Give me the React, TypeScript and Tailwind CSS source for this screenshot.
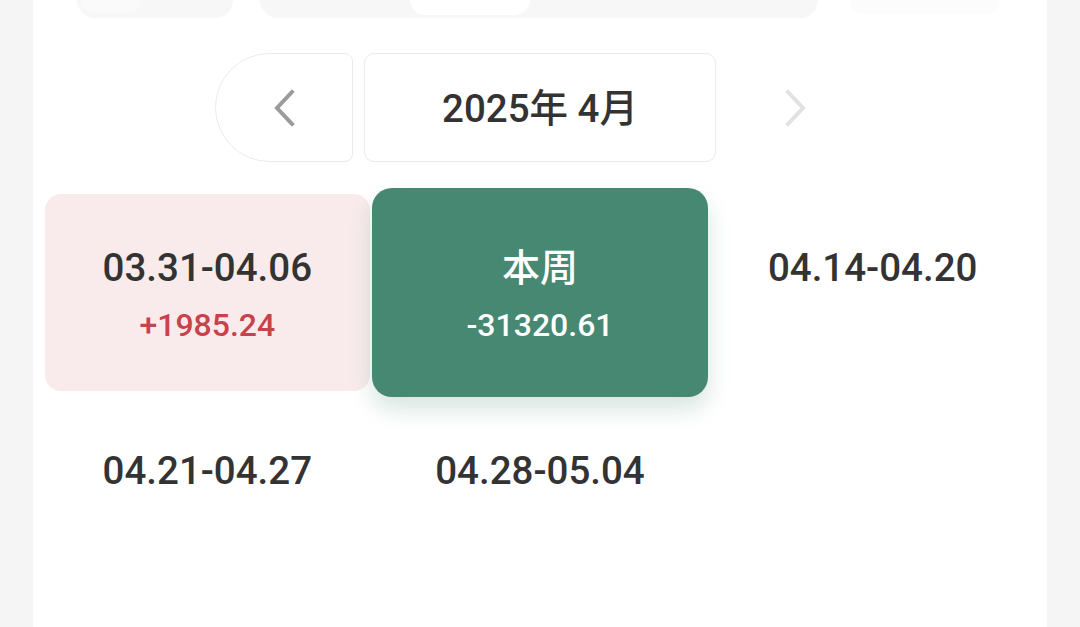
import React from "react";

type Week = { range: string; label?: string; amount?: string; kind?: "gain" | "current" };

const weeks: Week[] = [
  { range: "03.31-04.06", amount: "+1985.24", kind: "gain" },
  { range: "", label: "本周", amount: "-31320.61", kind: "current" },
  { range: "04.14-04.20" },
  { range: "04.21-04.27" },
  { range: "04.28-05.04" },
];

const font = { fontFamily: "Roboto, 'Noto Sans CJK SC', sans-serif" };

export default function App() {
  return (
    <div className="w-[1080px] h-[627px] bg-[#f5f5f5] overflow-hidden" style={font}>
      <div className="mx-[33px] h-full bg-white flex flex-col">
        {/* toolbar above, scrolled off */}
        <div className="flex items-start h-[18px] pl-[44px]">
          <div className="w-[156px] h-[18px] bg-[#f7f7f7] rounded-b-[40px] flex justify-start pl-[4px]">
            <div className="w-[60px] h-[13px] bg-[#fafafa] rounded-b-[30px]" />
          </div>
          <div className="ml-[27px] w-[558px] h-[18px] bg-[#f7f7f7] rounded-b-[40px] pl-[150px]">
            <div className="w-[120px] h-[15px] bg-white rounded-b-[30px]" />
          </div>
          <div className="ml-[32px] w-[150px] h-[14px] bg-[#fcfcfc] rounded-b-[20px]" />
        </div>

        {/* month switcher */}
        <div className="mt-[35px] flex justify-center gap-[11px]">
          <button className="w-[138px] h-[109px] border border-[#ebebeb] rounded-l-[55px] rounded-r-[8px] flex items-center justify-center">
            <Chevron dir="left" color="#9b9b9b" />
          </button>
          <div className="w-[352px] h-[109px] border border-[#ebebeb] rounded-[10px] flex items-center justify-center pt-[4px]">
            <span className="text-[38.5px] font-medium text-[#333] leading-none">2025年 4月</span>
          </div>
          <button className="w-[138px] h-[109px] flex items-center justify-center">
            <Chevron dir="right" color="#e2e2e2" />
          </button>
        </div>

        {/* weeks */}
        <div className="mt-[32px] px-[12px] grid grid-cols-3 gap-x-[8px] gap-y-[6px]">
          {weeks.map((w, i) => (
            <WeekCell key={i} week={w} />
          ))}
        </div>
      </div>
    </div>
  );
}

function WeekCell({ week }: { week: Week }) {
  if (week.kind === "current") {
    return (
      <div className="relative z-10 -mx-[6px] -my-[6px] h-[209px] rounded-[20px] bg-[#478872] shadow-[0_12px_22px_rgba(71,136,114,0.22)] flex flex-col items-center pt-[58px] text-white">
        <div className="text-[38px] font-medium leading-[44px]">{week.label}</div>
        <div className="mt-[16px] text-[32px] font-medium leading-[38px]">{week.amount}</div>
      </div>
    );
  }
  const bg = week.kind === "gain" ? "bg-[#f9ebeb]" : "bg-transparent";
  return (
    <div className={`h-[197px] rounded-[16px] ${bg} flex flex-col items-center pt-[52px]`}>
      <div className="text-[38.5px] font-medium leading-[44px] text-[#333]">{week.range}</div>
      {week.amount && (
        <div className="mt-[16px] text-[32px] font-medium leading-[38px] text-[#c9414b]">{week.amount}</div>
      )}
    </div>
  );
}

function Chevron({ dir, color }: { dir: "left" | "right"; color: string }) {
  return (
    <svg width="26" height="38" viewBox="0 0 26 38" fill="none">
      <path
        d={dir === "left" ? "M21 3 L6 19 L21 35" : "M5 3 L20 19 L5 35"}
        stroke={color}
        strokeWidth="4"
        strokeLinecap="square"
      />
    </svg>
  );
}
